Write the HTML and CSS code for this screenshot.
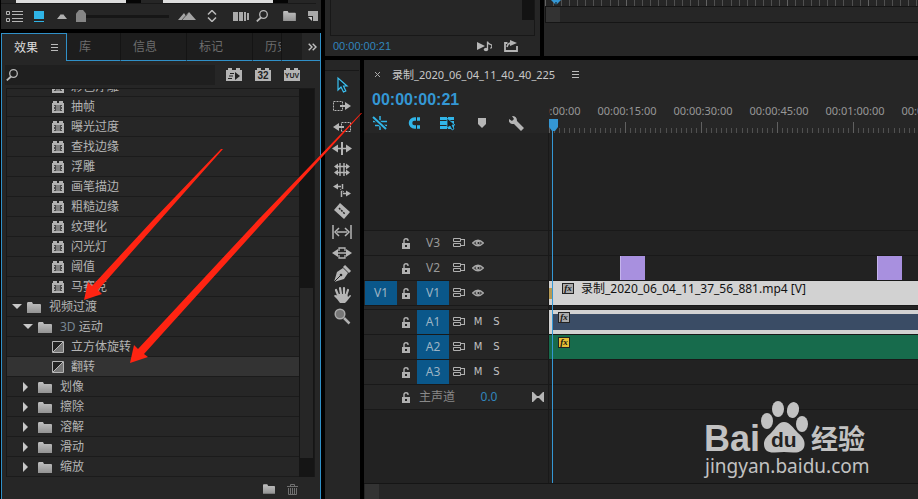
FILE: index.html
```html
<!DOCTYPE html>
<html lang="zh-CN">
  <head>
    <meta charset="UTF-8" />
    <meta name="viewport" content="width=device-width, initial-scale=1.0" />
    <title>录制_2020_06_04_11_40_40_225</title>
    <link rel="stylesheet" href="styles.css" />
  </head>

  <body>
    <!-- shared icons -->
    <svg class="defs" width="0" height="0">
      <defs>
        <linearGradient id="grey" x1="0" y1="0" x2="0" y2="1">
          <stop offset="0" stop-color="#c0c0c0" />
          <stop offset="1" stop-color="#939393" />
        </linearGradient>
        <symbol id="folder" viewBox="0 0 14 11">
          <path d="M0 1.5Q0 0 1 0h4l1 2h7q1 0 1 1v8H0z" fill="url(#grey)" />
        </symbol>
        <symbol id="effect" viewBox="0 0 12 12">
          <path d="M0 2h1V0h4v2h2V0h4v2h1v10H0z" fill="#b2b2b2" />
          <path d="M2 4h8v6H2z" fill="#4a4a4a" />
          <path d="M4 4h4v6H4z" fill="#808080" />
          <path d="M2 5h1v1H2zm0 3h1v1H2zm7-3h1v1H9zm0 3h1v1H9z" fill="#b2b2b2" />
        </symbol>
        <symbol id="transition" viewBox="0 0 12 12">
          <path d="M.5.5h11v11H.5z" fill="#222" stroke="#b5b5b5" />
          <path d="M11 1v10H1z" fill="#777" />
          <path d="M1 11 11 1" stroke="#bbb" />
        </symbol>
        <symbol id="search" viewBox="0 0 12 12">
          <circle cx="7.5" cy="4.5" r="3.8" fill="none" stroke="#b8b8b8" stroke-width="1.3" />
          <path d="M5 7.5.8 11.4" stroke="#b8b8b8" stroke-width="1.8" />
        </symbol>
        <symbol id="menu" viewBox="0 0 7 8">
          <path d="M0 .5h7M0 3.5h7M0 6.5h7" stroke="#bbb" />
        </symbol>
        <symbol id="lock" viewBox="0 0 9 11">
          <path d="M2 5V2.5Q2 .8 4 .8t2 1.7V3" fill="none" stroke="#b0b0b0" stroke-width="1.4" />
          <path d="M0 5h8v6H0z" fill="#b0b0b0" />
          <path d="M3 7h2v2H3z" fill="#222" />
        </symbol>
        <symbol id="sync" viewBox="0 0 12 10">
          <path d="M.5.5h7v3h-7zM.5 5.5h7v3h-7z" fill="none" stroke="#b0b0b0" />
          <path d="M8 1.5h3.5v6H8" fill="none" stroke="#b0b0b0" stroke-width="1.2" />
        </symbol>
        <symbol id="eye" viewBox="0 0 12 10">
          <path d="M.6 5Q6-.5 11.4 5 6 10.5.6 5z" fill="#444" stroke="#a8a8a8" stroke-width="1.3" />
          <circle cx="6" cy="4.8" r="2.2" fill="#aaa" />
          <circle cx="6.5" cy="5" r="1.1" fill="#222" />
        </symbol>
      </defs>
    </svg>

    <div class="app">
      <div class="left">
        <section class="panel project">
          <div class="thumbs"><i></i><i></i></div>
          <div class="project-bar">
            <button class="icon list-view" aria-label="列表视图">
              <svg width="17" height="11"><path d="M.5.5h3v3h-3zM.5 7.5h3v3h-3z" fill="none" stroke="#b5b5b5" /><path d="M6 .5h11M6 3.5h11M6 7.5h11M6 10.5h11" stroke="#b5b5b5" /></svg>
            </button>
            <button class="icon icon-view" aria-label="图标视图">
              <svg width="10" height="11"><path d="M0 0h10v8H0zM0 10h10v1H0z" fill="#2fb4e6" /></svg>
            </button>
            <svg width="10" height="6"><path d="M0 6 4 1l1 1 1-1 4 5z" fill="#b0b0b0" /></svg>
            <input type="range" class="size" min="0" max="100" value="0" aria-label="缩略图大小" />
            <svg class="big-hill" width="18" height="8"><path d="M0 8 6 1l2 3 3-4 7 8z" fill="#a5a5a5" /><path d="m4 8 6-7" stroke="#555" /></svg>
            <button class="icon sort" aria-label="排序">
              <svg width="10" height="12"><path d="m1 4.500 4-4 4 4M1 7.500l4 4 4-4" fill="none" stroke="#bbb" stroke-width="1.500" /></svg>
            </button>
            <button class="icon automate" aria-label="自动匹配序列">
              <svg width="16" height="9"><path d="M0 0h5v9H0zM6 0h4v9H6zM11 0h2v9h-2zM14 1h2v7h-2z" fill="#aaa" /></svg>
            </button>
            <button class="icon find" aria-label="查找"><svg width="12" height="12"><use href="#search" /></svg></button>
            <button class="icon bin" aria-label="新建素材箱"><svg width="13" height="10"><use href="#folder" /></svg></button>
            <button class="icon" aria-label="新建项">
              <svg width="10" height="10"><path d="M0 0h10v10H5V5H0z" fill="#aaa" /><path d="M0 6h4v4z" fill="#ccc" /></svg>
            </button>
          </div>
        </section>

        <section class="panel effects">
          <div class="tabs">
            <button class="tab active">效果 <svg width="7" height="8"><use href="#menu" /></svg></button>
            <button class="tab short">库</button>
            <button class="tab">信息</button>
            <button class="tab">标记</button>
            <button class="tab cut">历史</button>
            <button class="more" aria-label="更多">
              <svg width="9" height="8"><path d="m.7.700 3.300 3.300-3.300 3.300M4.700.700 8 4 4.700 7.300" fill="none" stroke="#c0c0c0" stroke-width="1.400" /></svg>
            </button>
          </div>
          <div class="search-row">
            <label class="search">
              <svg width="12" height="12"><use href="#search" /></svg>
              <input type="text" aria-label="搜索效果" />
            </label>
            <button class="badge" aria-label="加速效果">
              <svg width="12" height="8"><path d="M7 0v8l5-4z" fill="#222" /><path d="M2 1.500h4M1 4h4M0 6.500h4" stroke="#222" /></svg>
            </button>
            <button class="badge">32</button>
            <button class="badge yuv">YUV</button>
          </div>
          <div class="browser">
            <ul class="tree">
              <li class="item"><svg width="12" height="12"><use href="#effect" /></svg>彩色浮雕</li>
              <li class="item"><svg width="12" height="12"><use href="#effect" /></svg>抽帧</li>
              <li class="item"><svg width="12" height="12"><use href="#effect" /></svg>曝光过度</li>
              <li class="item"><svg width="12" height="12"><use href="#effect" /></svg>查找边缘</li>
              <li class="item"><svg width="12" height="12"><use href="#effect" /></svg>浮雕</li>
              <li class="item"><svg width="12" height="12"><use href="#effect" /></svg>画笔描边</li>
              <li class="item"><svg width="12" height="12"><use href="#effect" /></svg>粗糙边缘</li>
              <li class="item"><svg width="12" height="12"><use href="#effect" /></svg>纹理化</li>
              <li class="item"><svg width="12" height="12"><use href="#effect" /></svg>闪光灯</li>
              <li class="item"><svg width="12" height="12"><use href="#effect" /></svg>阈值</li>
              <li class="item"><svg width="12" height="12"><use href="#effect" /></svg>马赛克</li>
              <li class="group root open"><i class="arrow"></i><svg width="14" height="11"><use href="#folder" /></svg>视频过渡</li>
              <li class="group open"><i class="arrow"></i><svg width="14" height="11"><use href="#folder" /></svg><span><b>3D</b> 运动</span></li>
              <li class="item"><svg width="12" height="12"><use href="#transition" /></svg>立方体旋转</li>
              <li class="item selected"><svg width="12" height="12"><use href="#transition" /></svg>翻转</li>
              <li class="group"><i class="arrow"></i><svg width="14" height="11"><use href="#folder" /></svg>划像</li>
              <li class="group"><i class="arrow"></i><svg width="14" height="11"><use href="#folder" /></svg>擦除</li>
              <li class="group"><i class="arrow"></i><svg width="14" height="11"><use href="#folder" /></svg>溶解</li>
              <li class="group"><i class="arrow"></i><svg width="14" height="11"><use href="#folder" /></svg>滑动</li>
              <li class="group"><i class="arrow"></i><svg width="14" height="11"><use href="#folder" /></svg>缩放</li>
            </ul>
            <div class="scrollbar"><i></i></div>
          </div>
          <div class="effects-foot">
            <button class="icon" aria-label="新建自定义素材箱"><svg width="12" height="10"><use href="#folder" /></svg></button>
            <button class="icon" aria-label="删除">
              <svg width="11" height="11"><path d="M0 2.500h11M3.500 2V.500h4V2M1.500 4v6.500h8V4M3.500 4v6M5.500 4v6M7.500 4v6" fill="none" stroke="#707070" /></svg>
            </button>
          </div>
        </section>
      </div>

      <div class="right">
        <div class="top">
          <section class="panel source">
            <div class="source-view"><i></i></div>
            <div class="source-bar">
              <span class="timecode">00:00:00:21</span>
              <button class="icon play" aria-label="仅播放音频">
                <svg width="15" height="11"><path d="M0 1v8l8-4z" fill="#b8b8b8" /><path d="M10.500 8V.500q0 2 3 3t0 4" fill="none" stroke="#b8b8b8" stroke-width="1.300" /><ellipse cx="9" cy="8.500" rx="2.200" ry="1.700" fill="#b8b8b8" /></svg>
              </button>
              <button class="icon" aria-label="导出">
                <svg width="14" height="12"><path d="M3.500 3H1v8h12V6" fill="none" stroke="#b5b5b5" stroke-width="1.800" /><path d="M6 0v6l7-3z" fill="#b5b5b5" /><path d="M3 7q1-4 4-4" fill="none" stroke="#b5b5b5" stroke-width="1.500" /></svg>
              </button>
            </div>
          </section>
          <section class="panel program">
            <div class="program-ruler">
              <svg width="12" height="5"><path d="M1 0h10L6 5z" fill="#3497d4" /><path d="M6 2v3" stroke="#111" /></svg>
            </div>
            <div class="program-bar"><i></i></div>
          </section>
        </div>

        <div class="bottom">
          <nav class="panel tools">
            <button class="icon" aria-label="选择工具"><svg width="20" height="20"><path d="M6 3v12l3-3 2.500 5 2.300-1-2.300-5H15z" fill="#14242c" stroke="#3cc0f0" stroke-width="1.200" /></svg></button>
            <button class="icon" aria-label="向前选择轨道工具"><svg width="20" height="20"><path d="M1.500 5.500h9v9h-9z" fill="none" stroke="#b5b5b5" stroke-dasharray="2 1" /><path d="M8 9h5V6l6 4-6 4v-3H8z" fill="#b5b5b5" /></svg></button>
            <button class="icon" aria-label="向后选择轨道工具"><svg width="20" height="20"><path d="M9.500 5.500h9v9h-9z" fill="none" stroke="#b5b5b5" stroke-dasharray="2 1" /><path d="M12 9H7V6l-6 4 6 4v-3h5z" fill="#b5b5b5" /></svg></button>
            <button class="icon" aria-label="波纹编辑工具"><svg width="20" height="20"><path d="M10 4v13" stroke="#b5b5b5" stroke-width="2" /><path d="M3 10.500h14" stroke="#b5b5b5" stroke-width="1.500" /><path d="m0 10.500 6-4v8zM20 10.500l-6-4v8z" fill="#b5b5b5" /></svg></button>
            <button class="icon" aria-label="滚动编辑工具"><svg width="20" height="20"><path d="M8 4v13M12 4v13M4 7.500h12M4 13.500h12" stroke="#b5b5b5" stroke-width="1.400" /><path d="m2 7.500 4-3v6zM18 7.500l-4-3v6zM2 13.500l4-3v6zM18 13.500l-4-3v6z" fill="#b5b5b5" /></svg></button>
            <button class="icon" aria-label="比率拉伸工具"><svg width="20" height="20"><path d="M5 6.500h4M10.500 4v5M11 13.500h4M9.500 11v6" stroke="#b5b5b5" stroke-width="1.500" /><path d="m1 6.500 5-3v6zM19 13.500l-5-3v6z" fill="#b5b5b5" /><path d="m8 9 4 3" stroke="#b5b5b5" stroke-dasharray="1 1" /></svg></button>
            <button class="icon" aria-label="剃刀工具"><svg width="20" height="20"><path d="m8 2 10 9-6 7L2 9z" fill="#b5b5b5" /><path d="m7 7 6 6" stroke="#222" stroke-width="1.500" stroke-dasharray="2 1" /></svg></button>
            <button class="icon" aria-label="外滑工具"><svg width="20" height="20"><path d="M1 3v14M19 3v14" stroke="#b5b5b5" stroke-width="1.500" /><path d="M5 10h10M7 6l-4 4 4 4M13 6l4 4-4 4" fill="none" stroke="#b5b5b5" stroke-width="1.500" /></svg></button>
            <button class="icon" aria-label="内滑工具"><svg width="20" height="20"><path d="M7 8V5h6v3M7 12v3h6v-3M5 10h10" fill="none" stroke="#b5b5b5" stroke-width="1.300" /><path d="m0 10 6-4v8zM20 10l-6-4v8z" fill="#b5b5b5" /></svg></button>
            <button class="icon" aria-label="钢笔工具"><svg width="20" height="20"><path d="m2 18 3-10 6-4 5 5-4 6z" fill="#b5b5b5" /><path d="m12 2 6 6" stroke="#b5b5b5" stroke-width="3" /><path d="m2 18 7-7" stroke="#222" /><circle cx="9" cy="11" r="1.300" fill="#222" /></svg></button>
            <button class="icon" aria-label="手形工具"><svg width="20" height="20"><path d="M6 10 4 5M9 9 8 3M12 9V3M14 11l2-6" stroke="#b5b5b5" stroke-width="2.200" stroke-linecap="round" /><path d="M5 9h10l1 3 2-2q1 0 1 1l-4 5-2 2H8l-3-4-3-3q0-1 2-1l2 1z" fill="#b5b5b5" /></svg></button>
            <button class="icon" aria-label="缩放工具"><svg width="20" height="20"><circle cx="8" cy="8" r="4.800" fill="#777" stroke="#aaa" stroke-width="1.500" /><path d="m12 12 5.500 5.500" stroke="#b0b0b0" stroke-width="2.500" /></svg></button>
          </nav>

          <section class="panel timeline">
            <div class="sequence">
              <button class="close" aria-label="关闭"><svg width="5" height="5"><path d="m0 0 5 5M5 0 0 5" stroke="#aaa" /></svg></button>
              <span>录制_2020_06_04_11_40_40_225</span>
              <button class="icon" aria-label="菜单"><svg width="7" height="8"><use href="#menu" /></svg></button>
            </div>
            <div class="timeline-head">
              <div class="controls">
                <span class="big-timecode">00:00:00:21</span>
                <div class="toggles">
                  <button class="icon" aria-label="嵌套"><svg width="16" height="14"><path d="M1 5.500h14M3 9.500h12M8 0v4M8 8v6" stroke="#31b5e8" stroke-width="1.500" /><path d="m1 1 13 12" stroke="#262626" stroke-width="4" /><path d="m1 1 13 12" stroke="#31b5e8" stroke-width="2" /></svg></button>
                  <button class="icon" aria-label="对齐"><svg width="14" height="14"><path d="M13 3H7.500a4 4 0 0 0 0 8H13" fill="none" stroke="#31b5e8" stroke-width="3.500" /><path d="M9.500 1v4M9.500 9v4" stroke="#222" /></svg></button>
                  <button class="icon" aria-label="链接选择项"><svg width="16" height="15"><path d="M0 1h7v3H0zM8 1h6v3H8zM0 5h7v4H0zM0 10h7v3H0zM8 5h6v8H8z" fill="#31b5e8" /><path d="M7 2v10l3-2 2 4 2-1-2-4h3z" fill="#1c1c1c" stroke="#31b5e8" stroke-width=".8" /></svg></button>
                  <button class="icon" aria-label="添加标记"><svg width="8" height="10"><path d="M0 0h8v6l-4 4-4-4z" fill="#b5b5b5" /></svg></button>
                  <button class="icon" aria-label="时间轴设置"><svg width="15" height="15"><path d="M3 0 5 3 3 5 0 3q-1 5 5 5l7 7 3-3-7-7Q8 0 3 0z" fill="#b5b5b5" /></svg></button>
                </div>
              </div>
              <div class="ruler">
                <div class="marks">
                  <span>00:00:00:00</span><span>00:00:15:00</span><span>00:00:30:00</span><span>00:00:45:00</span><span>00:01:00:00</span><span>00:01:15:00</span>
                </div>
                <div class="ticks"></div>
                <div class="work-area"></div>
              </div>
            </div>

            <div class="tracks">
              <div class="track empty"><div class="head"></div><div class="lane"></div></div>
              <div class="track">
                <div class="head"><i></i><svg width="9" height="11"><use href="#lock" /></svg><button class="name">V3</button><svg width="12" height="10"><use href="#sync" /></svg><svg width="12" height="10"><use href="#eye" /></svg></div>
                <div class="lane"></div>
              </div>
              <div class="track">
                <div class="head"><i></i><svg width="9" height="11"><use href="#lock" /></svg><button class="name">V2</button><svg width="12" height="10"><use href="#sync" /></svg><svg width="12" height="10"><use href="#eye" /></svg></div>
                <div class="lane"><div class="clip purple first"></div><div class="clip purple second"></div></div>
              </div>
              <div class="track">
                <div class="head"><button class="name on">V1</button><svg width="9" height="11"><use href="#lock" /></svg><button class="name on">V1</button><svg width="12" height="10"><use href="#sync" /></svg><svg width="12" height="10"><use href="#eye" /></svg></div>
                <div class="lane"><div class="clip video"><b class="fx">fx</b>录制_2020_06_04_11_37_56_881.mp4 [V]</div></div>
              </div>
              <div class="track divider"><div class="head"></div><div class="lane"></div></div>
              <div class="track">
                <div class="head"><i></i><svg width="9" height="11"><use href="#lock" /></svg><button class="name on">A1</button><svg width="12" height="10"><use href="#sync" /></svg><button class="ms">M</button><button class="ms">S</button></div>
                <div class="lane"><div class="clip blue"><b class="fx">fx</b></div></div>
              </div>
              <div class="track">
                <div class="head"><i></i><svg width="9" height="11"><use href="#lock" /></svg><button class="name on">A2</button><svg width="12" height="10"><use href="#sync" /></svg><button class="ms">M</button><button class="ms">S</button></div>
                <div class="lane"><div class="clip green"><b class="fx yellow">fx</b></div></div>
              </div>
              <div class="track">
                <div class="head"><i></i><svg width="9" height="11"><use href="#lock" /></svg><button class="name on">A3</button><svg width="12" height="10"><use href="#sync" /></svg><button class="ms">M</button><button class="ms">S</button></div>
                <div class="lane"></div>
              </div>
              <div class="track">
                <div class="head master"><i></i><svg width="9" height="11"><use href="#lock" /></svg><span>主声道</span><span class="level">0.0</span><svg class="bow" width="12" height="10"><path d="M0 0h1l4 4h2l4-4h1v10h-1L7 6H5l-4 4H0z" fill="#b5b5b5" /></svg></div>
                <div class="lane"></div>
              </div>
              <div class="track rest"><div class="head"></div><div class="lane"></div></div>
              <div class="playhead"><svg width="9" height="12"><path d="M0 0h9v8l-3 4H3L0 8z" fill="#3497d4" /></svg></div>
            </div>
            <div class="zoombar"><i></i></div>
          </section>
        </div>
      </div>

      <svg class="pointers" width="370" height="370">
        <path d="M221 149h2L160 220 98 290l4 4-18 6 4-18 4 4 61-66z" />
        <path d="M361 113h1L265 220 144 354l4 3-18 6 4-18 4 4 120-129z" />
      </svg>

      <svg class="watermark" width="170" height="80">
        <g fill="#c2c2c2">
          <text class="bai" x="4" y="52">Bai</text>
          <ellipse cx="67" cy="22" rx="6" ry="8" />
          <ellipse cx="78" cy="10" rx="6" ry="8" />
          <ellipse cx="93" cy="11" rx="6" ry="8" transform="rotate(12 93 11)" />
          <ellipse cx="102" cy="25" rx="6" ry="8" />
          <path d="M84 23c6 0 9 6 14 11 5 4 7 8 6.500 12-.5 6-6 8-11.500 7.500-6-.7-12-.7-18 0C69 54 64 52 64 45c0-4 2-7 7-11 5-5 7-11 13-11z" />
          <text class="jingyan" x="111" y="50">经验</text>
          <text class="site" x="5" y="74">jingyan.baidu.com</text>
        </g>
        <text class="du" x="71" y="48">du</text>
      </svg>
    </div>
  </body>
</html>
```
FILE: styles.css
```css
* {
  box-sizing: border-box;
}
body {
  margin: 0;
  background: #000;
  color: #b4b4b4;
  font: 12px/16px "Noto Sans", "Noto Sans CJK SC", sans-serif;
  overflow: hidden;
}
svg {
  display: block;
  flex: none;
}
button {
  border: 0;
  margin: 0;
  padding: 0;
  background: none;
  color: inherit;
  font: inherit;
}
.defs {
  position: absolute;
}
.app {
  position: relative;
  display: grid;
  grid-template-columns: 320px minmax(0, 1fr);
  gap: 4px;
  height: 100vh;
  padding-left: 1px;
}
.left {
  display: grid;
  grid-template-rows: 29px minmax(0, 1fr);
  gap: 4px;
  min-height: 0;
}
.right {
  display: grid;
  grid-template-rows: 56px minmax(0, 1fr);
  gap: 4px;
  min-height: 0;
}
.panel {
  background: #262626;
  min-width: 0;
  overflow: hidden;
}

/* project panel */
.thumbs {
  display: flex;
  gap: 22px;
  height: 4px;
  padding-left: 15px;
  margin-right: 5px;
  border-bottom: 1px solid #191919;
}
.thumbs i {
  width: 125px;
  border-right: 15px solid #050505;
  background: #ddd;
}
.project-bar {
  display: flex;
  align-items: center;
  height: 24px;
  padding: 0 3px 0 5px;
}
.icon-view {
  margin: 0 13px 0 11px;
}
.size {
  appearance: none;
  width: 93px;
  height: 12px;
  margin: 0 9px;
  background: linear-gradient(#161616, #161616) center / 100% 3px no-repeat;
}
.size::-webkit-slider-thumb {
  appearance: none;
  width: 10px;
  height: 12px;
  background: #858585;
  clip-path: polygon(0 30%, 30% 0, 70% 0, 100% 30%, 100% 100%, 0 100%);
}
.sort {
  margin: 0 16px 0 11px;
}
.find {
  margin: 0 15px 0 7px;
}
.bin {
  margin-right: auto;
}

/* effects panel */
.effects {
  display: flex;
  flex-direction: column;
  border: 1px solid #3090c8;
  border-top: 0;
  border-bottom: 0;
}
.tabs {
  display: flex;
  flex: none;
  height: 28px;
  margin: 0 -1px;
}
.tab {
  width: 66px;
  padding-left: 12px;
  background: #1d1d1d;
  border-right: 1px solid #141414;
  border-bottom: 1px solid #3090c8;
  color: #6d6d6d;
  text-align: left;
  white-space: nowrap;
  overflow: hidden;
}
.tab.active {
  display: flex;
  align-items: center;
  gap: 13px;
  background: #262626;
  border: 1px solid #3090c8;
  border-bottom: 0;
  color: #ddd;
}
.tab.short {
  width: 54px;
}
.tab.cut {
  width: 29px;
}
.more {
  display: flex;
  flex: 1;
  align-items: center;
  justify-content: flex-end;
  padding-right: 4px;
  border-bottom: 1px solid #3090c8;
  background: linear-gradient(90deg, #1d1d1d 20px, #262626 20px);
}
.search-row {
  display: flex;
  flex: none;
  align-items: center;
  gap: 13px;
  height: 27px;
  padding-left: 3px;
}
.search {
  display: flex;
  align-items: center;
  width: 210px;
  height: 20px;
  padding-left: 1px;
  margin-right: -2px;
  background: #1f1f1f;
}
.search input {
  width: 180px;
  border: 0;
  background: none;
  color: #ccc;
}
.badge {
  display: flex;
  align-items: center;
  justify-content: center;
  width: 16px;
  height: 13px;
  padding-top: 2px;
  background: #b4b4b4;
  clip-path: polygon(0 2px, 2px 2px, 2px 0, 6px 0, 6px 2px, 10px 2px, 10px 0, 14px 0, 14px 2px, 100% 2px, 100% 100%, 0 100%);
  color: #222;
  font: bold 10px/10px "Liberation Sans", sans-serif;
}
.badge.yuv {
  font-size: 7px;
}
.browser {
  display: flex;
  flex: 1;
  min-height: 0;
  margin: 0 5px 0 4px;
  border: 1px solid #191919;
  border-bottom: 0;
}
.tree {
  display: flex;
  flex: 1;
  flex-direction: column;
  justify-content: flex-end;
  margin: 0;
  padding: 0;
  list-style: none;
  overflow: hidden;
}
.tree li {
  display: flex;
  flex: none;
  align-items: center;
  height: 20px;
  padding-top: 1px;
  border-bottom: 1px solid #1b1b1b;
}
.tree .item {
  gap: 7px;
  padding-left: 45px;
}
.tree .selected {
  background: #333;
}
.tree .group {
  gap: 8px;
  padding-left: 16px;
}
.tree .root {
  padding-left: 5px;
}
.tree .group b {
  color: #788694;
  font-weight: normal;
}
.arrow {
  width: 10px;
  height: 10px;
  margin-right: -3px;
  background: #c8c8c8;
  clip-path: polygon(0 0, 5px 5px, 0 10px);
}
.open .arrow {
  clip-path: polygon(0 2px, 100% 2px, 5px 7px);
}
.scrollbar {
  width: 15px;
  padding: 199px 1px 19px;
  background: #151515;
}
.scrollbar i {
  display: block;
  height: 100%;
  background: #262626;
}
.effects-foot {
  display: flex;
  flex: none;
  align-items: center;
  justify-content: flex-end;
  gap: 12px;
  height: 22px;
  padding: 2px 22px 0 0;
}

/* monitors */
.top {
  display: grid;
  grid-template-columns: 215px minmax(0, 1fr);
  gap: 4px;
}
.source-view {
  display: flex;
  justify-content: flex-end;
  height: 36px;
  margin: 0 5px;
  border: 1px solid #181818;
  border-top: 0;
}
.source-view i {
  width: 12px;
  height: 20px;
  background: #131313;
}
.source-bar {
  display: flex;
  align-items: center;
  height: 20px;
  padding: 0 22px 0 8px;
}
.timecode {
  color: #3185bd;
  font: 11px/16px "Liberation Sans", sans-serif;
}
.play {
  margin: 0 12px 0 auto;
}
.program-ruler {
  height: 6px;
  padding-left: 6px;
  background:
    repeating-linear-gradient(90deg, #626262 0 1px, transparent 1px calc(242px / 3)) 1px 0,
    repeating-linear-gradient(90deg, #505050 0 1px, transparent 1px calc(242px / 30)) 1px 1px;
}
.program-bar {
  height: 17px;
  margin-left: 1px;
  border: 1px solid #151515;
  border-right: 0;
}
.program-bar i {
  display: block;
  width: 14px;
  height: 15px;
  background: #333;
}

/* tools */
.bottom {
  display: grid;
  grid-template-columns: 35px minmax(0, 1fr);
  gap: 4px;
  min-height: 0;
}
.tools {
  display: flex;
  flex-direction: column;
  align-items: center;
  gap: 1px;
  padding-right: 1px;
}
.tools::before {
  content: "";
  flex: none;
  width: 100%;
  height: 13px;
  border-top: 1px solid #181818;
  margin: 10px 0 -10px;
}

/* timeline */
.timeline {
  display: flex;
  flex-direction: column;
}
.sequence {
  display: flex;
  flex: none;
  align-items: center;
  height: 29px;
  padding-left: 11px;
  color: #c8c8c8;
  font-size: 11px;
}
.sequence span {
  margin: 0 17px 0 12px;
}
.timeline-head {
  display: grid;
  flex: none;
  grid-template-columns: 185px minmax(0, 1fr);
  height: 44px;
}
.controls {
  padding: 1px 0 0 8px;
}
.big-timecode {
  display: block;
  color: #3497d4;
  font: bold 16px/20px "Liberation Sans", sans-serif;
}
.toggles {
  display: grid;
  grid-template-columns: repeat(5, 34px);
  align-items: center;
  justify-items: center;
  height: 26px;
  margin-left: -9px;
}
.ruler {
  display: flex;
  flex-direction: column;
  justify-content: flex-end;
  overflow: hidden;
}
.marks {
  display: flex;
  margin-left: -36px;
  color: #979797;
  font-size: 11px;
  line-height: 23px;
}
.marks span {
  flex: none;
  width: 76px;
  text-align: center;
}
.ticks {
  height: 12px;
  background:
    repeating-linear-gradient(90deg, #606060 0 1px, transparent 1px 76px),
    repeating-linear-gradient(90deg, #505050 0 1px, transparent 1px calc(76px / 15)) 0 6px no-repeat;
}
.work-area {
  height: 2px;
  background: linear-gradient(90deg, #e02818 3px, #f0e800 3px);
}
.tracks {
  position: relative;
  display: flex;
  flex: 1;
  flex-direction: column;
  min-height: 0;
  background: #222;
}
.track {
  display: grid;
  flex: none;
  grid-template-columns: 185px minmax(0, 1fr);
  height: 25px;
  border-top: 1px solid #191919;
}
.track.empty {
  height: 97px;
  border: 0;
}
.track.divider {
  height: 4px;
}
.track.rest {
  flex: 1;
}
.head {
  display: grid;
  grid-template-columns: 32px 20px 32px 20px 18px 19px;
  align-items: center;
  justify-items: center;
  padding-left: 1px;
  border-right: 1px solid #191919;
  background: #262626;
}
.head [width="9"] {
  margin-right: 2px;
}
.empty .head,
.rest .head {
  background: #222;
}
.name {
  width: 100%;
  height: 24px;
  color: #999;
}
.name.on {
  background: #0a578a;
  color: #9db4c4;
}
.ms {
  color: #c0c0c0;
  font: 10px/12px "DejaVu Sans", sans-serif;
}
.head.master {
  grid-template-columns: 32px 20px 40px 64px 1fr;
  color: #898989;
}
.level {
  color: #3185bd;
}
.bow {
  justify-self: end;
  margin-right: 4px;
}
.lane {
  display: flex;
  min-width: 0;
}
.clip {
  height: 24px;
}
.purple {
  width: 25px;
  background: #a890df;
  border-left: 1px solid #c4b4ec;
}
.purple.first {
  margin-left: 71px;
}
.purple.second {
  margin-left: 232px;
}
.video,
.blue,
.green {
  flex: 1;
  overflow: hidden;
  white-space: nowrap;
}
.video {
  padding-left: 13px;
  background: linear-gradient(#b59a55, #b59a55) 0 7px / 3px 11px no-repeat #d2d2d2;
  color: #111;
}
.blue {
  padding: 2px 0 0 9px;
  background: #3a4c65;
  box-shadow: inset 4px 4px #d2d2d2, inset 0 -4px #d2d2d2;
}
.green {
  padding: 2px 0 0 9px;
  background: #176b4c;
}
.fx {
  display: inline-block;
  width: 12px;
  height: 11px;
  margin-right: 7px;
  border: 1px solid #222;
  background: #aaa;
  color: #111;
  font: italic bold 9px/8px "Liberation Serif", serif;
  text-align: center;
  vertical-align: top;
}
.video .fx {
  margin-top: 2px;
}
.fx.yellow {
  background: #e8bd35;
}
.playhead {
  position: absolute;
  top: -14px;
  bottom: 0;
  left: 185px;
  width: 9px;
  background: linear-gradient(#3497d4, #3497d4) 3px 0 / 1px 100% no-repeat;
}
.zoombar {
  flex: none;
  height: 16px;
  border-top: 1px solid #151515;
  padding-left: 1px;
}
.zoombar i {
  display: block;
  width: 14px;
  height: 15px;
  background: #333;
}

/* overlays */
.pointers {
  position: absolute;
  top: 0;
  left: 0;
  fill: #ff2412;
  pointer-events: none;
}
.watermark {
  position: absolute;
  right: 48px;
  bottom: 20px;
}
.bai {
  font: bold 36px "Liberation Sans", sans-serif;
}
.du {
  fill: #222;
  font: bold 21px "Liberation Sans", sans-serif;
}
.jingyan {
  font: bold 27px "Noto Sans CJK SC", sans-serif;
}
.site {
  font: 19px "Noto Sans", sans-serif;
}
```
